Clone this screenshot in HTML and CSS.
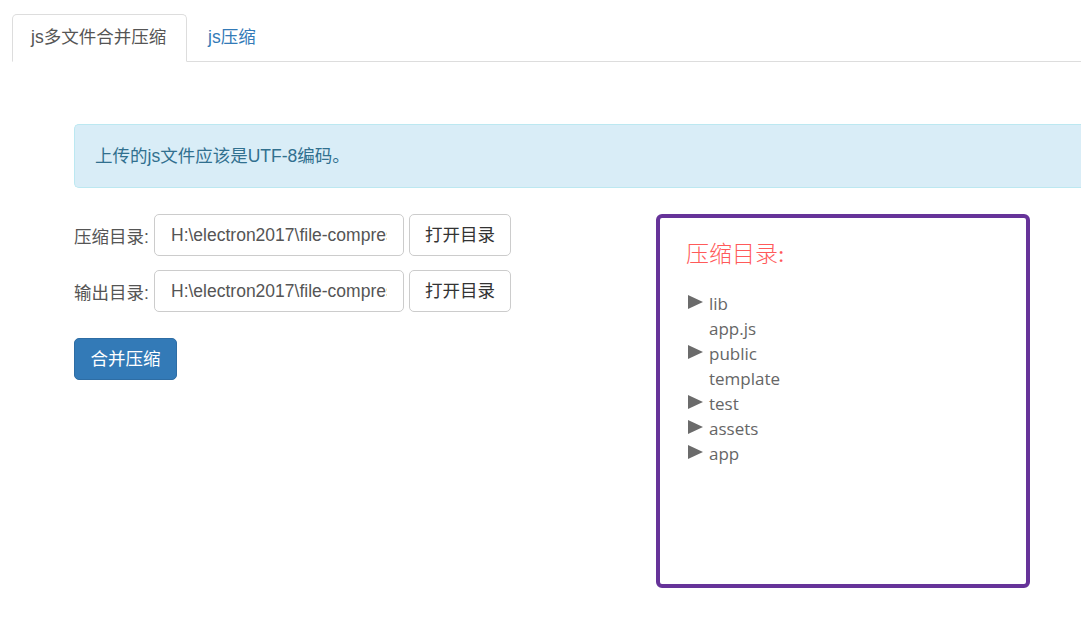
FILE: index.html
```html
<!DOCTYPE html>
<html lang="zh-CN">
<head>
<meta charset="utf-8">
<title>js压缩</title>
<link rel="stylesheet" href="styles.css">
</head>
<body>
<ul class="tabs">
  <li class="tab active">js多文件合并压缩</li>
  <li class="tab link">js压缩</li>
</ul>
<div class="content">
  <div class="alert">上传的js文件应该是UTF-8编码。</div>
  <div class="main">
    <div class="form">
      <div class="row">
        <label class="label">压缩目录:</label>
        <input class="input" type="text" value="H:\electron2017\file-compress\src">
        <button class="btn">打开目录</button>
      </div>
      <div class="row">
        <label class="label">输出目录:</label>
        <input class="input" type="text" value="H:\electron2017\file-compress\dist">
        <button class="btn">打开目录</button>
      </div>
      <button class="btn primary">合并压缩</button>
    </div>
    <div class="panel">
      <div class="panel-title">压缩目录:</div>
      <ul class="tree">
        <li class="node folder">lib</li>
        <li class="node">app.js</li>
        <li class="node folder">public</li>
        <li class="node">template</li>
        <li class="node folder">test</li>
        <li class="node folder">assets</li>
        <li class="node folder">app</li>
      </ul>
    </div>
  </div>
</div>
</body>
</html>
```
FILE: styles.css
```css
html, body {
  margin: 0;
  padding: 0;
  overflow: hidden;
  background: #fff;
}
body {
  font-family: "Liberation Sans", Arial, "Noto Sans CJK SC", sans-serif;
  font-size: 17.5px;
  color: #555;
}
.tabs {
  list-style: none;
  margin: 14px 0 0 12px;
  padding: 0;
  display: flex;
  border-bottom: 1px solid #ddd;
  height: 47px;
}
.tab {
  height: 47px;
  box-sizing: border-box;
  padding: 0 18px;
  line-height: 45px;
  margin-right: 2px;
  border: 1px solid transparent;
  border-radius: 5px 5px 0 0;
}
.tab.active {
  border-color: #ddd;
  border-bottom-color: #fff;
  background: #fff;
  height: 48px;
  color: #555;
  width: 175px;
}
.tab.link {
  color: #337ab7;
}
.content {
  padding: 62px 0 0 74px;
}
.alert {
  height: 64px;
  box-sizing: border-box;
  background: #d9edf7;
  border: 1px solid #bce8f1;
  border-right: 0;
  border-radius: 5px 0 0 5px;
  color: #31708f;
  padding: 0 20px;
  line-height: 62px;
}
.main {
  display: flex;
  margin-top: 26px;
}
.form {
  width: 582px;
}
.row {
  display: flex;
  align-items: center;
  height: 42px;
  margin-bottom: 14px;
}
.label {
  width: 80px;
  color: #555;
}
.input {
  width: 250px;
  height: 42px;
  box-sizing: border-box;
  border: 1px solid #ccc;
  border-radius: 5px;
  padding: 0 16px;
  font-family: "Liberation Sans", Arial, sans-serif;
  font-size: 17.5px;
  color: #555;
  margin-right: 5px;
  outline: none;
}
.btn {
  height: 42px;
  width: 102px;
  box-sizing: border-box;
  border: 1px solid #ccc;
  border-radius: 5px;
  background: #fff;
  color: #333;
  font-family: "Liberation Sans", Arial, "Noto Sans CJK SC", sans-serif;
  font-size: 17.5px;
  padding: 0 0 3px 0;
}
.btn.primary {
  margin-top: 12px;
  width: 103px;
  background: #337ab7;
  border-color: #2e6da4;
  color: #fff;
}
.panel {
  width: 374px;
  height: 374px;
  box-sizing: border-box;
  border: 4px solid #663399;
  border-radius: 6px;
  padding: 20px 26px;
}
.panel-title {
  font-family: "Liberation Serif", "Noto Sans CJK SC", serif;
  font-weight: 300;
  font-size: 23px;
  color: #ff5a5a;
  line-height: 34px;
}
.tree {
  list-style: none;
  margin: 19px 0 0 0;
  padding: 0;
}
.node {
  font-family: "Open Sans", "Noto Sans", sans-serif;
  font-size: 17px;
  color: #666;
  line-height: 25px;
  padding-left: 23px;
  position: relative;
}
.node.folder::before {
  content: "";
  position: absolute;
  left: 2px;
  top: 4px;
  width: 0;
  height: 0;
  border-left: 15px solid #6b6b6b;
  border-top: 7px solid transparent;
  border-bottom: 7px solid transparent;
}
```
